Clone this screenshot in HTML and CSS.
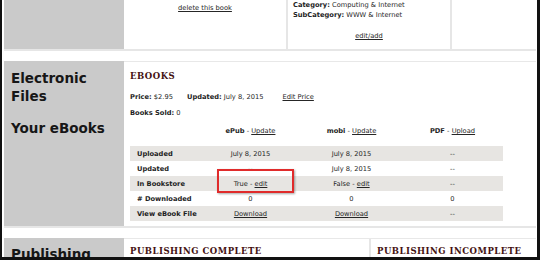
FILE: index.html
```html
<!DOCTYPE html>
<html>
<head>
    <title>Your eBooks</title>
    <link rel="stylesheet" href="styles.css">
</head>
<body>
    <div class="frame">
        <div class="page">
            <div class="section book">
                <div class="side"></div>
                <div class="main">
                    <div class="col col-a"><a href="#">delete this book</a></div>
                    <div class="col col-b">
                        <p class="line"><b>Category:</b> Computing &amp; Internet</p>
                        <p class="line"><b>SubCategory:</b> WWW &amp; Internet</p>
                        <p class="line center edit-add"><a href="#">edit/add</a></p>
                    </div>
                    <div class="col col-c"></div>
                </div>
            </div>
            <div class="sep"></div>

            <div class="section ebooks">
                <div class="side">
                    <h2>Electronic<br>Files</h2>
                    <h2 class="sub">Your eBooks</h2>
                </div>
                <div class="main">
                    <h3>EBOOKS</h3>
                    <div class="meta">
                        <span><b>Price:</b> $2.95</span>
                        <span><b>Updated:</b> July 8, 2015</span>
                        <a href="#" class="edit-price">Edit Price</a>
                    </div>
                    <p class="line sold"><b>Books Sold:</b> 0</p>
                    <table class="files">
                        <tr class="head">
                            <td class="label"></td>
                            <td><b>ePub</b> - <a href="#">Update</a></td>
                            <td><b>mobi</b> - <a href="#">Update</a></td>
                            <td><b>PDF</b> - <a href="#">Upload</a></td>
                        </tr>
                        <tr class="shade">
                            <td class="label">Uploaded</td>
                            <td>July 8, 2015</td>
                            <td>July 8, 2015</td>
                            <td>--</td>
                        </tr>
                        <tr>
                            <td class="label">Updated</td>
                            <td>--</td>
                            <td>July 8, 2015</td>
                            <td>--</td>
                        </tr>
                        <tr class="shade">
                            <td class="label">In Bookstore</td>
                            <td class="marked">True - <a href="#">edit</a><span class="callout"></span></td>
                            <td>False - <a href="#">edit</a></td>
                            <td>--</td>
                        </tr>
                        <tr>
                            <td class="label"># Downloaded</td>
                            <td>0</td>
                            <td>0</td>
                            <td>0</td>
                        </tr>
                        <tr class="shade">
                            <td class="label">View eBook File</td>
                            <td><a href="#">Download</a></td>
                            <td><a href="#">Download</a></td>
                            <td>--</td>
                        </tr>
                    </table>
                </div>
            </div>
            <div class="sep"></div>

            <div class="section publishing">
                <div class="side">
                    <h2>Publishing</h2>
                </div>
                <div class="main">
                    <div class="col col-done">
                        <h3>PUBLISHING COMPLETE</h3>
                    </div>
                    <div class="col col-todo">
                        <h3>PUBLISHING INCOMPLETE</h3>
                        <p class="line">Upload a title to complete publishing.</p>
                    </div>
                </div>
            </div>
        </div>
    </div>
</body>
</html>
```

FILE: styles.css
```css
body {
    margin: 0;
    background-color: #fff;
    font-family: "DejaVu Sans", Verdana, sans-serif;
    font-size: 6.7px;
    color: #262626;
}
a {
    color: #262626;
    text-decoration: underline;
}
b {
    color: #1e1e1e;
}
.frame {
    width: 540px;
    height: 260px;
    box-sizing: border-box;
    border: 3px solid #111;
    border-top: 0;
    border-left-width: 2px;
    overflow: hidden;
}
.page {
    padding: 0 1px 0 2px;
}
.section {
    display: flex;
}
.side {
    width: 120px;
    flex-shrink: 0;
    box-sizing: border-box;
    background-color: #cacaca;
    padding: 8px 0 0 7px;
}
.main {
    flex: 1;
    border-top: 1px solid #e8e8e8;
}
.sep {
    border-top: 2px solid #e6e6e6;
    height: 10px;
}
.line {
    margin: 0;
    line-height: 10px;
}
.center {
    text-align: center;
}
h2 {
    margin: 0;
    font-size: 13.5px;
    line-height: 18px;
    color: #161616;
}
h2.sub {
    margin-top: 14px;
}
h3 {
    margin: 0;
    font-family: "DejaVu Serif", Georgia, serif;
    font-size: 8.5px;
    line-height: 12px;
    letter-spacing: 0.5px;
    color: #451212;
}

/* book details */
.book .side {
    height: 49px;
}
.book .main {
    display: flex;
    border-top: 0;
}
.col {
    box-sizing: border-box;
}
.col-a {
    width: 164px;
    border-right: 2px solid #e6e6e6;
    text-align: center;
    padding-top: 3px;
    line-height: 10px;
}
.col-b {
    width: 164px;
    border-right: 2px solid #e6e6e6;
    padding-left: 5px;
}
.edit-add {
    margin-top: 11px;
    padding-right: 5px;
}

/* ebooks */
.ebooks .main {
    padding: 8px 0 5px 6px;
}
.meta {
    display: flex;
    gap: 14px;
    margin-top: 10px;
    line-height: 10px;
}
.edit-price {
    margin-left: 5px;
}
.sold {
    margin-top: 6px;
}
.files {
    margin-top: 8px;
    width: 373px;
    border-collapse: collapse;
    table-layout: fixed;
}
.files td {
    width: 101px;
    height: 15px;
    padding: 0;
    text-align: center;
    line-height: 10px;
}
.files td.label {
    width: 70px;
    padding-left: 7px;
    text-align: left;
    font-weight: bold;
    color: #1e1e1e;
}
.files .head td {
    height: 20px;
    padding-bottom: 10px;
    vertical-align: top;
    box-sizing: border-box;
}
.files .shade td {
    background-color: #e7e5e2;
}
.marked {
    position: relative;
}
.callout {
    position: absolute;
    left: 17px;
    top: -7px;
    width: 73px;
    height: 20px;
    border: 2px solid #e02b2b;
    box-shadow: 1px 1px 2px rgba(0, 0, 0, 0.35);
}

/* publishing */
.publishing .side {
    padding-top: 7px;
    height: 40px;
}
.publishing .main {
    display: flex;
}
.col-done {
    width: 247px;
    border-right: 2px solid #e6e6e6;
    padding: 6px 0 0 6px;
}
.col-todo {
    padding: 6px 0 0 6px;
}
```
